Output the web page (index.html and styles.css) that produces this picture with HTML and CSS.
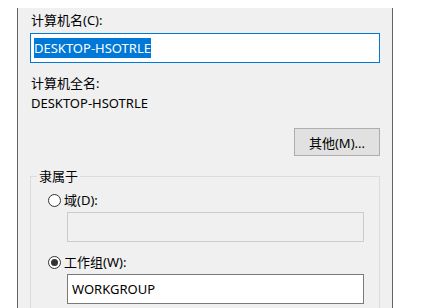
FILE: index.html
```html
<!DOCTYPE html>
<html lang="zh-CN">
<head>
    <meta charset="UTF-8">
    <title>计算机名</title>
    <link rel="stylesheet" href="styles.css">
</head>
<body>

<div class="panel">
    <div class="label">计算机名(C):</div>
    <div class="textbox focused">
        <span class="selected">DESKTOP-HSOTRLE</span>
    </div>

    <div class="label full-name-label">计算机全名:</div>
    <div class="value">DESKTOP-HSOTRLE</div>

    <div class="button-row">
        <button class="win-button">其他(M)...</button>
    </div>

    <fieldset class="group">
        <legend>隶属于</legend>

        <div class="radio-row">
            <span class="radio"></span>
            <span>域(D):</span>
        </div>
        <div class="textbox disabled"></div>

        <div class="radio-row second">
            <span class="radio checked"></span>
            <span>工作组(W):</span>
        </div>
        <div class="textbox plain">WORKGROUP</div>
    </fieldset>
</div>

</body>
</html>
```

FILE: styles.css
```css
body {
    margin: 0;
    padding: 0;
    background-color: #ffffff;
    font-family: 'Noto Sans', 'Noto Sans CJK SC', sans-serif;
    font-size: 13px;
    color: #000000;
    overflow: hidden;
}

.panel {
    margin: 8px 0 0 17px;
    width: 376px;
    height: 300px;
    box-sizing: border-box;
    background-color: #f0f0f0;
    border-left: 1px solid #646464;
    border-right: 1px solid #646464;
    padding: 4px 12px 0 12px;
}

.label {
    line-height: 16px;
    padding-left: 1px;
}

.textbox {
    height: 30px;
    box-sizing: border-box;
    margin-top: 5px;
    padding: 4px 3px;
    line-height: 20px;
    background-color: #ffffff;
    border: 1px solid #7a7a7a;
}

.textbox.focused {
    border-color: #0078d7;
}

.selected {
    background-color: #0078d7;
    color: #ffffff;
    padding: 1px 0;
}

.full-name-label {
    margin-top: 12px;
}

.value {
    margin-top: 4px;
    line-height: 16px;
    padding-left: 1px;
}

.button-row {
    display: flex;
    justify-content: flex-end;
    margin-top: 17px;
}

.win-button {
    width: 86px;
    height: 28px;
    background-color: #e1e1e1;
    border: 1px solid #adadad;
    font-family: inherit;
    font-size: 13px;
    color: #000000;
    padding: 0;
}

.group {
    margin: 12px 0 0 0;
    padding: 0 0 10px 6px;
    border: 1px solid #dcdcdc;
}

.group legend {
    padding: 0 2px;
    line-height: 16px;
}

.radio-row {
    display: flex;
    align-items: center;
    gap: 3px;
    margin: 8px 0 0 11px;
    line-height: 16px;
}

.radio-row.second {
    margin-top: 12px;
}

.radio {
    width: 13px;
    height: 13px;
    box-sizing: border-box;
    border: 1px solid #333333;
    border-radius: 50%;
    background-color: #ffffff;
    display: flex;
    align-items: center;
    justify-content: center;
}

.radio.checked::after {
    content: '';
    width: 7px;
    height: 7px;
    border-radius: 50%;
    background-color: #333333;
}

.group .textbox {
    margin: 4px 0 0 30px;
    width: 297px;
}

.textbox.disabled {
    background-color: #f0f0f0;
    border-color: #cccccc;
}

.textbox.plain {
    padding-left: 4px;
}
```
